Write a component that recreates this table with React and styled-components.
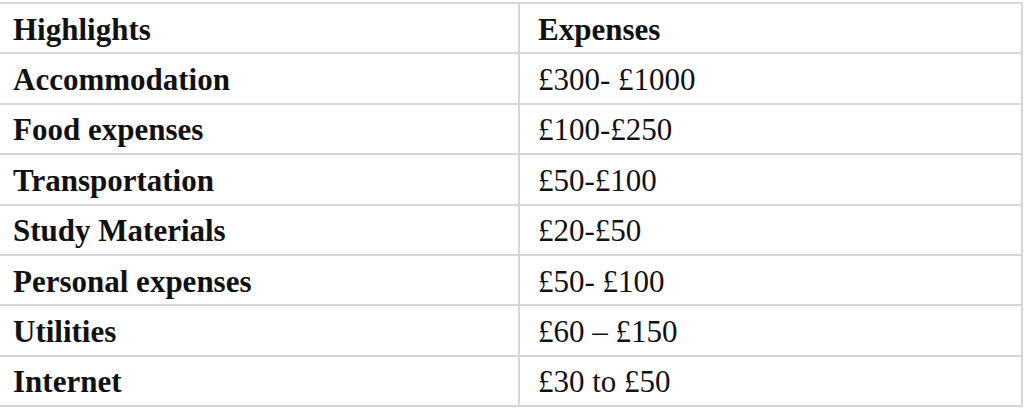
import React from "react";
import styled, { createGlobalStyle } from "styled-components";

const Global = createGlobalStyle`
  html, body { margin: 0; padding: 0; background: #ffffff; }
  body { font-family: "Liberation Serif", "Times New Roman", serif; }
`;

const Table = styled.div`
  margin-top: 2px;
  width: 1023px;
  border-top: 2px solid #d6d6d6;
  border-right: 2px solid #d6d6d6;
  box-sizing: border-box;
`;

const Row = styled.div`
  display: grid;
  grid-template-columns: 518px 1fr;
  height: 50.4px;
  border-bottom: 2px solid #d6d6d6;
  box-sizing: border-box;
`;

const Cell = styled.div`
  display: flex;
  align-items: center;
  padding-left: ${(p) => (p.$second ? "18px" : "13px")};
  padding-top: 3px;
  border-left: ${(p) => (p.$second ? "2px solid #d6d6d6" : "none")};
  font-size: 31px;
  font-weight: ${(p) => (p.$bold ? 700 : 400)};
  color: #111111;
  white-space: nowrap;
`;

const rows = [
  ["Highlights", "Expenses", true],
  ["Accommodation", "£300- £1000"],
  ["Food expenses", "£100-£250"],
  ["Transportation", "£50-£100"],
  ["Study Materials", "£20-£50"],
  ["Personal expenses", "£50- £100"],
  ["Utilities", "£60 – £150"],
  ["Internet", "£30 to £50"],
];

export default function App() {
  return (
    <>
      <Global />
      <Table>
        {rows.map(([a, b, head]) => (
          <Row key={a}>
            <Cell $bold>{a}</Cell>
            <Cell $second $bold={!!head}>{b}</Cell>
          </Row>
        ))}
      </Table>
    </>
  );
}
